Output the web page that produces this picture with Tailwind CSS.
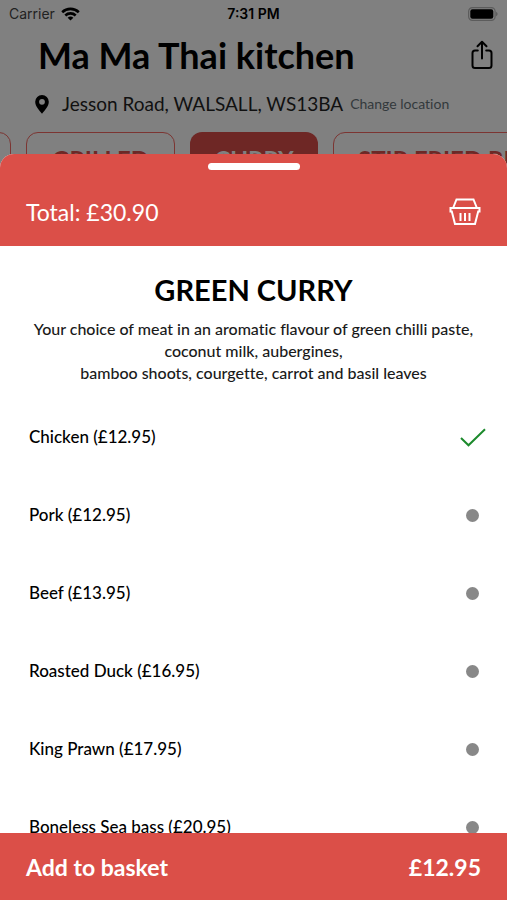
<!DOCTYPE html>
<html lang="en">
<head>
<meta charset="utf-8">
<meta name="viewport" content="width=device-width, initial-scale=1">
<title>Ma Ma Thai kitchen</title>
<script src="https://cdn.jsdelivr.net/npm/@tailwindcss/browser@4"></script>
</head>
<body class="relative flex h-screen flex-col overflow-hidden bg-[#808080] font-['Lato','Noto_Sans',sans-serif] text-black [font-variant-ligatures:no-common-ligatures]">

  <!-- Status bar -->
  <div class="grid h-7 shrink-0 grid-cols-3 items-center px-[9px] font-['Inter','Liberation_Sans',sans-serif] text-[14px] leading-4">
    <div class="flex items-center gap-[6px] text-[#222]">
      <span>Carrier</span>
      <svg class="h-[14px] w-[19px]" viewBox="0 0 19 14" fill="none" stroke="#000" stroke-width="2.6" aria-hidden="true">
        <path d="M1.2 5.2a12 12 0 0 1 16.6 0"/>
        <path d="M4.3 8.5a7.5 7.5 0 0 1 10.4 0"/>
        <path d="M9.5 13.6 6.6 10.7a4.3 4.3 0 0 1 5.8 0Z" fill="#000" stroke="none"/>
      </svg>
    </div>
    <div class="text-center font-semibold">7:31 PM</div>
    <svg class="h-[14px] w-[30px] justify-self-end" viewBox="0 0 30 14" aria-hidden="true">
      <rect x=".6" y=".6" width="26.5" height="12.8" rx="3.8" fill="none" stroke="#5c5c5c" stroke-width="1.2"/>
      <rect x="2.3" y="2.3" width="23" height="9.4" rx="2.2"/>
      <path d="M28.2 4.8c1.8.8 1.8 3.6 0 4.4Z" fill="#555"/>
    </svg>
  </div>

  <!-- Restaurant header -->
  <header class="shrink-0">
    <div class="flex h-14 items-center justify-between pr-[14px] pb-[2px] pl-[38px]">
      <h1 class="text-[36px] leading-10 font-bold whitespace-nowrap">Ma Ma Thai kitchen</h1>
      <button type="button" aria-label="Share">
        <svg class="h-[30px] w-[22px]" viewBox="0 0 22 30" fill="none" stroke="#000" stroke-width="2" stroke-linecap="round" stroke-linejoin="round">
          <path d="M6.8 10.5H4A2.500 2.500 0 0 0 1.500 13v12.500A2.500 2.500 0 0 0 4 28h14a2.500 2.500 0 0 0 2.500-2.500V13a2.500 2.500 0 0 0-2.500-2.500h-2.800"/>
          <path d="M11 18.500V2M6.500 6.300 11 1.800l4.500 4.500"/>
        </svg>
      </button>
    </div>
    <div class="flex h-10 items-center pl-[35px] whitespace-nowrap">
      <svg class="h-[19px] w-[14px]" viewBox="0 0 14 19" aria-hidden="true">
        <path fill-rule="evenodd" d="M7 0a6.800 6.800 0 0 1 6.800 6.800C13.800 11.500 9.500 15.500 7 18.800 4.500 15.500.2 11.500.2 6.800A6.800 6.800 0 0 1 7 0Zm0 3.900a2.900 2.900 0 1 0 0 5.800 2.900 2.900 0 0 0 0-5.800Z"/>
      </svg>
      <span class="ml-[13px] text-[19px] leading-6 text-[#111]">Jesson Road, WALSALL, WS13BA</span>
      <a href="#location" class="ml-[7px] text-[14px] leading-6 text-[#33393c]">Change location</a>
    </div>
    <nav class="-ml-[60px] flex gap-[15px] overflow-hidden pt-2 text-[24px] leading-7 font-bold whitespace-nowrap text-[#6e2826]">
      <a href="#starters" class="h-14 w-[71px] shrink-0 rounded-xl border border-[#7c3532]" aria-label="Starters"></a>
      <a href="#grilled" class="flex h-14 w-[149px] shrink-0 items-center justify-center rounded-xl border border-[#7c3532]">GRILLED</a>
      <a href="#curry" class="flex h-14 w-[128px] shrink-0 items-center justify-center rounded-xl bg-[#6e2725] text-[#808080]">CURRY</a>
      <a href="#stir-fried" class="flex h-14 shrink-0 items-center rounded-xl border border-[#7c3532] px-6">STIR FRIED RICE</a>
    </nav>
  </header>

  <!-- Item sheet -->
  <main class="absolute inset-x-0 top-[154px] bottom-0 flex flex-col overflow-hidden rounded-t-[14px] bg-white">
    <div class="shrink-0 bg-[#db4f48] pt-[9px] text-white">
      <div class="mx-auto h-[7px] w-[92px] rounded-full bg-white"></div>
      <div class="flex h-19 items-center justify-between px-[26px] pt-2">
        <p class="text-[23px] leading-8">Total: £30.90</p>
        <button type="button" aria-label="Basket">
          <svg class="h-[28px] w-[32px]" viewBox="0 0 32 28" fill="none" stroke="#fff" stroke-width="2">
            <path d="M4.300 9.500 7.500 1.500h17l3.200 8"/>
            <path d="M1.500 10h29v3.500h-1.300L26 26H6L2.800 13.500H1.500Z"/>
            <path d="M11.500 15v8M16 15v8M20.500 15v8"/>
          </svg>
        </button>
      </div>
    </div>

    <form class="flex min-h-0 grow flex-col">
      <div class="min-h-0 grow overflow-y-auto [scrollbar-width:none]">
        <div class="px-6 pt-[26px] pb-[14px] text-center">
          <h2 class="text-[29px] leading-9 font-bold">GREEN CURRY</h2>
          <p class="mt-[10px] text-[16px] leading-[22px] font-medium text-[#1a1a1a]">Your choice of meat in an aromatic flavour of green chilli paste, coconut milk, aubergines,<br>bamboo shoots, courgette, carrot and basil leaves</p>
        </div>
        <fieldset class="text-[17px] leading-6 font-medium">
          <legend class="sr-only">Choose your meat</legend>
          <label class="flex h-[78px] items-center justify-between pr-[21px] pl-[29px]">Chicken (£12.95)
            <span class="grid w-[27px] place-items-center">
              <input type="radio" name="meat" checked class="peer col-start-1 row-start-1 size-[13px] appearance-none rounded-full bg-[#888] checked:bg-transparent">
              <svg class="pointer-events-none col-start-1 row-start-1 hidden h-[19px] w-[26px] peer-checked:block" viewBox="0 0 26 19" fill="none" stroke="#1c8a2c" stroke-width="2"><path d="m1 10 7.500 7.300L25 1.200"/></svg>
            </span></label>
          <label class="flex h-[78px] items-center justify-between pr-[28px] pl-[29px]">Pork (£12.95)
            <input type="radio" name="meat" class="size-[13px] appearance-none rounded-full bg-[#888]"></label>
          <label class="flex h-[78px] items-center justify-between pr-[28px] pl-[29px]">Beef (£13.95)
            <input type="radio" name="meat" class="size-[13px] appearance-none rounded-full bg-[#888]"></label>
          <label class="flex h-[78px] items-center justify-between pr-[28px] pl-[29px]">Roasted Duck (£16.95)
            <input type="radio" name="meat" class="size-[13px] appearance-none rounded-full bg-[#888]"></label>
          <label class="flex h-[78px] items-center justify-between pr-[28px] pl-[29px]">King Prawn (£17.95)
            <input type="radio" name="meat" class="size-[13px] appearance-none rounded-full bg-[#888]"></label>
          <label class="flex h-[78px] items-center justify-between pr-[28px] pl-[29px]">Boneless Sea bass (£20.95)
            <input type="radio" name="meat" class="size-[13px] appearance-none rounded-full bg-[#888]"></label>
        </fieldset>
      </div>
      <button type="button" class="flex h-[67px] shrink-0 items-center justify-between bg-[#db4f48] px-[26px] text-[23px] leading-8 font-bold text-white">
        <span>Add to basket</span>
        <span>£12.95</span>
      </button>
    </form>
  </main>
</body>
</html>
